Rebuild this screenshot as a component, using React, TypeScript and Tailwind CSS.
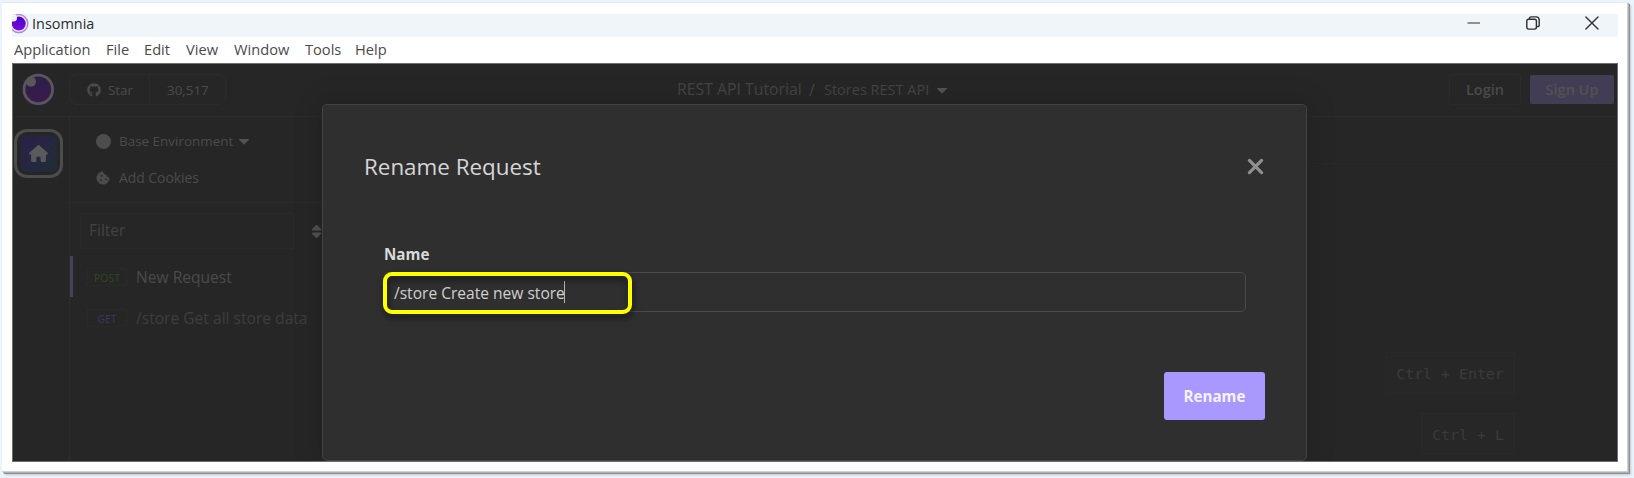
import type { ReactNode } from "react";
import { FaCookieBite, FaGithub, FaHouse, FaSort } from "react-icons/fa6";

const menu = [
  { label: "Application", cell: "w-[92px]" },
  { label: "File", cell: "w-[38px]" },
  { label: "Edit", cell: "w-[42px]" },
  { label: "View", cell: "w-[48px]" },
  { label: "Window", cell: "w-[71px]" },
  { label: "Tools", cell: "w-[50px]" },
  { label: "Help", cell: "w-[40px]" },
];

function Caret() {
  return (
    <svg width="10" height="6" viewBox="0 0 10 6" className="mt-px shrink-0 fill-[#525252]">
      <path d="M.6 0h8.800c.6 0 .8.600.4 1L5.700 5.100c-.4.400-1 .4-1.400 0L.2 1C-.2.600 0 0 .6 0Z" />
    </svg>
  );
}

function TitleBar() {
  return (
    <div className="flex h-[23px] items-center overflow-hidden bg-[#f0f5fa]">
      <svg width="20" height="23" viewBox="0 0 20 23" className="shrink-0">
        <defs>
          <linearGradient id="brand" x1="0" y1="0" x2="0" y2="1">
            <stop offset="0" stopColor="#4a00c8" />
            <stop offset="1" stopColor="#7a0be0" />
          </linearGradient>
        </defs>
        <circle cx="6.800" cy="9.600" r="9" fill="#f6f2ff" stroke="#a88ade" strokeWidth="1.5" />
        <circle cx="6.800" cy="9.600" r="7" fill="url(#brand)" />
        <circle cx="1.600" cy="4" r="3.400" fill="#f3effc" />
      </svg>
      <span className="mt-[-3px] text-[14.45px] leading-5 text-[#2a2a2a]">Insomnia</span>
      <div className="mr-[19px] ml-auto flex h-[23px] items-start gap-[45px] pt-[2px]">
        <svg width="14" height="14" viewBox="0 0 14 14" fill="none">
          <path d="M.5 7H13" stroke="#858585" strokeWidth="1.8" />
        </svg>
        <svg width="14" height="14" viewBox="0 0 14 14" fill="none" stroke="#2e2e2e" strokeWidth="1.4">
          <rect x=".8" y="3.3" width="9.6" height="9.8" rx="1.8" />
          <path d="M3.4 3V2.6C3.4 1.5 4.2.9 5.200.9h4.900c1.800 0 3.100 1.300 3.100 3.100v4.700c0 1.100-.7 1.900-1.800 1.900h-.6" />
        </svg>
        <svg width="14" height="14" viewBox="0 0 14 14" fill="none" stroke="#333" strokeWidth="1.4" strokeLinecap="round">
          <path d="M.9.9 13 13M13 .9.9 13" />
        </svg>
      </div>
    </div>
  );
}

function MenuBar() {
  return (
    <div className="flex h-[26px] items-center bg-white pb-[2px] pl-[2px] text-[14.65px] leading-6 text-[#4a4a4a]">
      {menu.map((m) => (
        <span key={m.label} className={m.cell}>
          {m.label}
        </span>
      ))}
    </div>
  );
}

function Header() {
  return (
    <header className="flex h-[53px] items-start border-b border-[#2a2a2a]">
      <svg width="34" height="34" viewBox="0 0 34 34" className="mt-[8px] ml-[8px] shrink-0">
        <defs>
          <linearGradient id="dim" x1="0" y1="0" x2="0" y2="1">
            <stop offset="0" stopColor="#2b1f4a" />
            <stop offset="1" stopColor="#3b1b4b" />
          </linearGradient>
        </defs>
        <circle cx="17.300" cy="17.400" r="16.500" fill="#2c2047" />
        <circle cx="17.300" cy="17.400" r="14.300" fill="url(#dim)" stroke="#585858" strokeWidth="2.800" />
        <circle cx="10" cy="9.700" r="5" fill="#585858" />
      </svg>
      <div className="mt-[10px] ml-[14px] flex h-[31px] w-[157px] rounded-lg border border-[#2b2b2b] text-[13.4px] leading-[30px] text-[#4b4b4b]">
        <div className="flex w-[80px] items-center border-r border-[#2b2b2b] pl-[17px]">
          <FaGithub size={14} className="mr-[7px] shrink-0" />
          <span>Star</span>
        </div>
        <span className="pl-[17px]">30,517</span>
      </div>
      <div className="mt-[15px] ml-[451px] flex h-[22px] items-center text-[#444]">
        <span className="w-[132px] text-[15.8px]">REST API Tutorial</span>
        <span className="w-[15px] text-[16px]">/</span>
        <span className="w-[113px] text-[14.5px] whitespace-nowrap">Stores REST API</span>
        <Caret />
      </div>
      <div className="mt-[10px] mr-[3px] ml-auto flex gap-[9px] text-center text-[14.5px] leading-[30px] font-semibold text-[#4a4a4a]">
        <div className="h-[31px] w-[72px] rounded-[3px] border border-[#2a2a2a]">Login</div>
        <div className="mt-px h-[29px] w-[84px] rounded-[2px] bg-[#423d54] text-[#525252]">Sign Up</div>
      </div>
    </header>
  );
}

function RequestRow({ badge, children, active }: { badge: ReactNode; children: string; active?: boolean }) {
  return (
    <div className={`flex h-[41px] items-center border-l-[3px] ${active ? "border-[#45405c] text-[#4b4b4b]" : "border-transparent text-[#3e3e3e]"}`}>
      <span className="ml-[14px] h-[18px] w-[40px] shrink-0 border border-[#292929] text-center text-[10.4px] leading-[18px]">{badge}</span>
      <span className="ml-[9px] text-[15.6px] leading-6 whitespace-nowrap">{children}</span>
    </div>
  );
}

function Sidebar() {
  return (
    <div className="w-[255px] shrink-0 border-l border-[#2c2c2c]">
      <div className="flex h-[86px] flex-col border-b border-[#2b2b2b] pt-[14px] pl-[26px] text-[13.5px] leading-[20px] text-[#4b4b4b]">
        <div className="flex items-center">
          <span className="mr-[8px] size-[15px] rounded-full bg-[#4d4d4d]" />
          <span className="mr-[6px] text-[13.45px]">Base Environment</span>
          <Caret />
        </div>
        <div className="mt-[17px] flex items-center">
          <FaCookieBite size={14} className="mr-[9px]" />
          <span className="text-[13.88px]">Add Cookies</span>
        </div>
      </div>
      <div className="flex items-center pt-[10px] pl-[10px]">
        <div className="h-[36px] w-[215px] border border-[#292929] pl-[8px] text-[15.5px] leading-[33px] text-[#434343]">Filter</div>
        <FaSort size={15} className="ml-[15px] shrink-0 text-[#505050]" />
      </div>
      <div className="pt-[7px]">
        <RequestRow active badge={<span className="text-[#2f4a22]">POST</span>}>New Request</RequestRow>
        <RequestRow badge={<span className="text-[#3c3860]">GET</span>}>/store Get all store data</RequestRow>
      </div>
    </div>
  );
}

function RenameDialog() {
  return (
    <div className="absolute top-[40px] left-[309px] h-[357px] w-[985px] rounded-[5px] border border-[#434343] bg-[#2f2f2f] shadow-[0_0_24px_8px_rgba(0,0,0,0.09)]">
      <div className="mt-[46px] flex h-[32px] items-center justify-between pr-[42px] pl-[41px]">
        <h1 className="text-[22.4px] leading-[32px] text-[#d6d6d6]">Rename Request</h1>
        <svg width="17" height="17" viewBox="0 0 17 17" className="mt-[-2px]" fill="none" stroke="#8f8f8f" strokeWidth="3.200" strokeLinecap="round">
          <path d="m2.400 2.400 12.200 12.200M14.600 2.400 2.400 14.600" />
        </svg>
      </div>
      <label className="mt-[59px] ml-[61px] block text-[15.2px] leading-6 font-bold text-[#dadada]">Name</label>
      <div className="relative mt-[6px] ml-[61px] flex h-[40px] w-[862px] items-center rounded-[5px] border border-[#4a4a4a] pl-[9px]">
        <span className="mt-px text-[15.57px] leading-6 text-[#d0d0d0]">/store Create new store</span>
        <span className="ml-[-1px] h-[22px] w-px bg-[#b5b5b5]" />
        <span className="absolute top-[-1px] left-[-2px] h-[42px] w-[249px] rounded-[9px] border-4 border-[#ffff00] drop-shadow-[1px_4px_3px_rgba(0,0,0,0.55)]" />
      </div>
      <button className="mt-[60px] ml-[841px] block h-[48px] w-[101px] rounded-[3px] bg-[#a999ff] text-[15.14px] leading-[48px] font-bold text-[#f6f3ff]">
        Rename
      </button>
    </div>
  );
}

export default function App() {
  return (
    <div className="h-[478px] w-[1634px] overflow-hidden bg-[#eaf4fd] pt-[2px] pl-[2px] font-['Open_Sans',sans-serif]">
      <div className="h-[470px] w-[1626px] bg-white pt-[12px] pl-[10px] shadow-[inset_0_1px_0_#e4e8ec,inset_-1px_-1px_0_#d0d0d0,1px_1px_0_#b0b0b0,2px_2px_0_#8f8f8f,3px_3px_2px_#c4c8cc]">
        <div className="w-[1606px]">
          <TitleBar />
          <MenuBar />
          <main className="relative h-[399px] overflow-hidden border border-[#6e6e6e] bg-[#262626]">
            <Header />
            <div className="flex h-[344px]">
              <nav className="w-[56px] shrink-0 pt-[12px] pl-px">
                <div className="flex size-[49px] items-center justify-center rounded-[13px] border-[3px] border-[#4c4c4c]">
                  <div className="flex size-[36px] items-center justify-center rounded-[5px] bg-linear-to-br from-[#2a1f4a] to-[#202d35]">
                    <FaHouse size={19} className="text-[#5a5a5a]" />
                  </div>
                </div>
              </nav>
              <Sidebar />
              <section className="grow">
                <div className="h-[47px] border-b border-[#292929]" />
                <div className="mt-[188px] mr-[102px] flex flex-col items-end gap-[19px] text-[14.9px] leading-[42px] text-[#3b3b3b]">
                  <kbd className="h-[42px] w-[130px] border border-[#292929] bg-[#272727] text-center font-['DejaVu_Sans_Mono',monospace]">Ctrl + Enter</kbd>
                  <kbd className="h-[42px] w-[94px] border border-[#292929] bg-[#272727] text-center font-['DejaVu_Sans_Mono',monospace]">Ctrl + L</kbd>
                </div>
              </section>
            </div>
            <RenameDialog />
          </main>
        </div>
      </div>
    </div>
  );
}
